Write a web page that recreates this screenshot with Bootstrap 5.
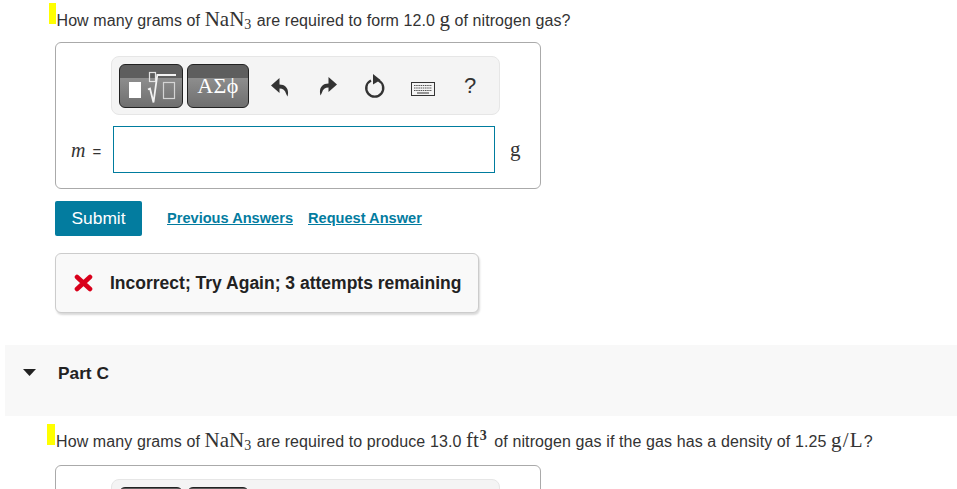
<!DOCTYPE html>
<html lang="en">
<head>
<meta charset="UTF-8">
<meta name="viewport" content="width=device-width, initial-scale=1.0">
<title>Part B</title>
<link href="https://cdn.jsdelivr.net/npm/bootstrap@5.3.0/dist/css/bootstrap.min.css" rel="stylesheet">
<style>
html, body { height: 489px; overflow: hidden; }
body { background: #fff; color: #333; font-family: "Liberation Sans", Arial, sans-serif; font-size: 16px; }
.page-clip { height: 489px; overflow: hidden; }
.part-body { padding-left: 55px; width: 957px; }
.q-text { position: relative; height: 24px; line-height: 24px; white-space: nowrap; margin: 0; padding: 1px 0 0 1.500px; letter-spacing: .08px; }
.q-first { margin-top: 8px; }
.q-second { padding-left: 1px; letter-spacing: .1px; }
.hl-mark { position: absolute; width: 7px; height: 21px; background: #ff0; left: -6px; top: -5px; }
.q-second .hl-mark { width: 8px; left: -8px; top: -5px; }
.mth { font-family: "Liberation Serif", "Times New Roman", serif; font-size: 21px; color: #333; letter-spacing: 0; line-height: 1; }
.mth sub { font-size: 14px; bottom: -.2em; }
.mth sup { font-size: 14px; top: -.5em; font-weight: 700; margin-left: 1px; margin-right: 3px; }
.gap-l { margin-right: 1px; }
.mth-wide { letter-spacing: 1.200px; }
.ans-box { width: 486px; height: 147px; margin-top: 10px; border: 1px solid #aaa; border-radius: 6px; padding: 13px 0 0 55px; }
.tool-bar { width: 389px; height: 59px; background: #f4f4f4; border: 1px solid #e6e6e6; border-radius: 8px; padding: 7px 0 0 7px; }
.tpl-btn { height: 44px; border: 1px solid #222; border-radius: 6px; padding: 0; background: linear-gradient(#5e5e5e 0 32%, #8d8d8d 32%, #6f6f6f 100%); color: #fff; }
.tpl-one { width: 64px; margin-right: 4px; }
.tpl-two { width: 62px; font-family: "Liberation Serif", serif; font-size: 22px; line-height: 38px; letter-spacing: .4px; }
.tool-ic { display: block; color: #333; }
.ic-undo { margin-left: 22px; margin-top: 14px; }
.ic-redo { margin-left: 30px; margin-top: 13px; }
.ic-reset { margin-left: 27px; margin-top: 10px; }
.ic-kbd { margin-left: 25px; margin-top: 18px; }
.ic-help { margin-left: 29px; margin-top: 11px; font-size: 22px; line-height: 1; color: #333; }
.ans-row { margin-top: 11px; height: 47px; margin-left: -55px; }
.m-label { width: 57px; padding-left: 15px; font-size: 15px; white-space: nowrap; }
.m-label i { font-family: "Liberation Serif", serif; font-size: 20px; margin-right: 7px; }
.ans-input { width: 382px; height: 47px; border: 1px solid #007c9e; border-radius: 0; }
.unit-g { margin-left: 15px; font-family: "Liberation Serif", serif; font-size: 21px; }
.btn-submit { width: 87px; height: 35px; margin-top: 12px; padding: 0; border-radius: 2px; background: #037c9f; border: 0; color: #fff; font-size: 17.4px; }
.act-links { margin-top: 12px; height: 35px; }
.act-links a { color: #037c9f; font-size: 14.6px; font-weight: 700; }
.act-first { margin-left: 25px; margin-right: 15px; }
.fb-box { width: 424px; height: 60px; margin-top: 17px; background: #f9f9f9; border: 1px solid #ccc; border-radius: 6px; box-shadow: 1px 2px 2px rgba(0, 0, 0, .15); padding-left: 18px; color: #222; font-weight: 700; font-size: 17.5px; white-space: nowrap; }
.fb-x { margin-right: 17px; }
.part-bar { margin: 32px 0 0 5px; width: 952px; height: 71px; background: #f8f8f8; padding: 18px 0 0 18px; color: #222; font-weight: 700; font-size: 17.3px; }
.part-arrow { margin-top: 6px; }
.part-name { margin-left: 22px; line-height: 20px; }
.q-wrap { margin-top: 13px; }
.ans-cut { margin-top: 12px; }
</style>
</head>
<body>
<div class="page-clip">
    <div class="part-body">
        <p class="q-text q-first"><span class="hl-mark"></span>How many grams of <span class="mth gap-l">NaN<sub>3</sub></span> are required to form 12.0 <span class="mth">g</span> of nitrogen gas?</p>

        <div class="ans-box">
            <div class="tool-bar d-flex align-items-start">
                <button type="button" class="btn tpl-btn tpl-one" aria-label="Templates">
                    <svg width="62" height="42" viewBox="0 0 62 42" class="d-block">
                        <rect x="9" y="17" width="12" height="16" fill="#fff"/>
                        <rect x="29.500" y="7.500" width="6" height="9" fill="none" stroke="#e4e4e4" stroke-width="1.200"/>
                        <path d="M28 24.500l2-1 3.500 14 3.800-27.500h18.700" fill="none" stroke="#f2f2f2" stroke-width="1.800"/>
                        <rect x="43.500" y="17.500" width="11" height="16" fill="none" stroke="#d4d4d4" stroke-width="1.200"/>
                    </svg>
                </button>
                <button type="button" class="btn tpl-btn tpl-two">ΑΣϕ</button>
                <svg class="tool-ic ic-undo" width="18" height="19" viewBox="0 0 18 19">
                    <path d="M8.500 0L0 7.500 8.500 15v-4.500c3.500 0 5.500 1.500 6.500 5 .5 1 1.500 3 1.500 3 2-7-1.500-12-8-12z" fill="#333"/>
                </svg>
                <svg class="tool-ic ic-redo" width="18" height="19" viewBox="0 0 18 19">
                    <path d="M9.500 0L18 7.500 9.500 15v-4.500c-3.500 0-5.500 1.500-6.500 5-.5 1-1.500 3-1.500 3-2-7 1.500-12 8-12z" fill="#333"/>
                </svg>
                <svg class="tool-ic ic-reset" width="22" height="24" viewBox="0 0 22 24">
                    <path d="M14.500 6.500a8.500 8.500 0 1 1-7.500 0" fill="none" stroke="#333" stroke-width="2.400"/>
                    <path d="M9 0l7.500 6L9 10.500z" fill="#333"/>
                </svg>
                <svg class="tool-ic ic-kbd" width="24" height="14" viewBox="0 0 24 14">
                    <rect x=".5" y=".5" width="23" height="13" fill="#f4f4f4" stroke="#333"/>
                    <path d="M3 3.500h18M3 6h18M3 8.500h18" stroke="#555" stroke-width="1.200" stroke-dasharray="1.500 .7"/>
                    <path d="M6 11h12" stroke="#555" stroke-width="1.200"/>
                </svg>
                <span class="tool-ic ic-help">?</span>
            </div>
            <div class="ans-row d-flex align-items-center">
                <label class="m-label"><i>m</i>=</label>
                <input type="text" class="form-control ans-input" aria-label="m">
                <span class="unit-g">g</span>
            </div>
        </div>

        <div class="d-flex">
            <button type="button" class="btn btn-submit">Submit</button>
            <div class="act-links d-flex align-items-center">
                <a href="#" class="act-first">Previous Answers</a>
                <a href="#">Request Answer</a>
            </div>
        </div>

        <div class="fb-box d-flex align-items-center">
            <svg class="fb-x" width="19" height="18" viewBox="0 0 19 18">
                <path d="M3 3l13 12M16 3L3 15" stroke="#d9001b" stroke-width="4.600" stroke-linecap="round"/>
            </svg>
            Incorrect; Try Again; 3 attempts remaining
        </div>
    </div>

    <div class="part-bar d-flex align-items-start">
        <svg class="part-arrow" width="13" height="7" viewBox="0 0 13 7">
            <path d="M0 0h13L6.500 7z" fill="#222"/>
        </svg>
        <span class="part-name">Part C</span>
    </div>

    <div class="part-body">
        <p class="q-text q-second q-wrap"><span class="hl-mark"></span>How many grams of <span class="mth gap-l">NaN<sub>3</sub></span> are required to produce 13.0 <span class="mth">ft<sup>3</sup></span> of nitrogen gas if the gas has a density of 1.25 <span class="mth mth-wide">g/L</span>?</p>
        <div class="ans-box ans-cut">
            <div class="tool-bar d-flex align-items-start">
                <button type="button" class="btn tpl-btn tpl-one" aria-label="Templates"></button>
                <button type="button" class="btn tpl-btn tpl-two" aria-label="Symbols"></button>
            </div>
        </div>
    </div>
</div>
<script src="https://cdn.jsdelivr.net/npm/bootstrap@5.3.0/dist/js/bootstrap.bundle.min.js"></script>
</body>
</html>
